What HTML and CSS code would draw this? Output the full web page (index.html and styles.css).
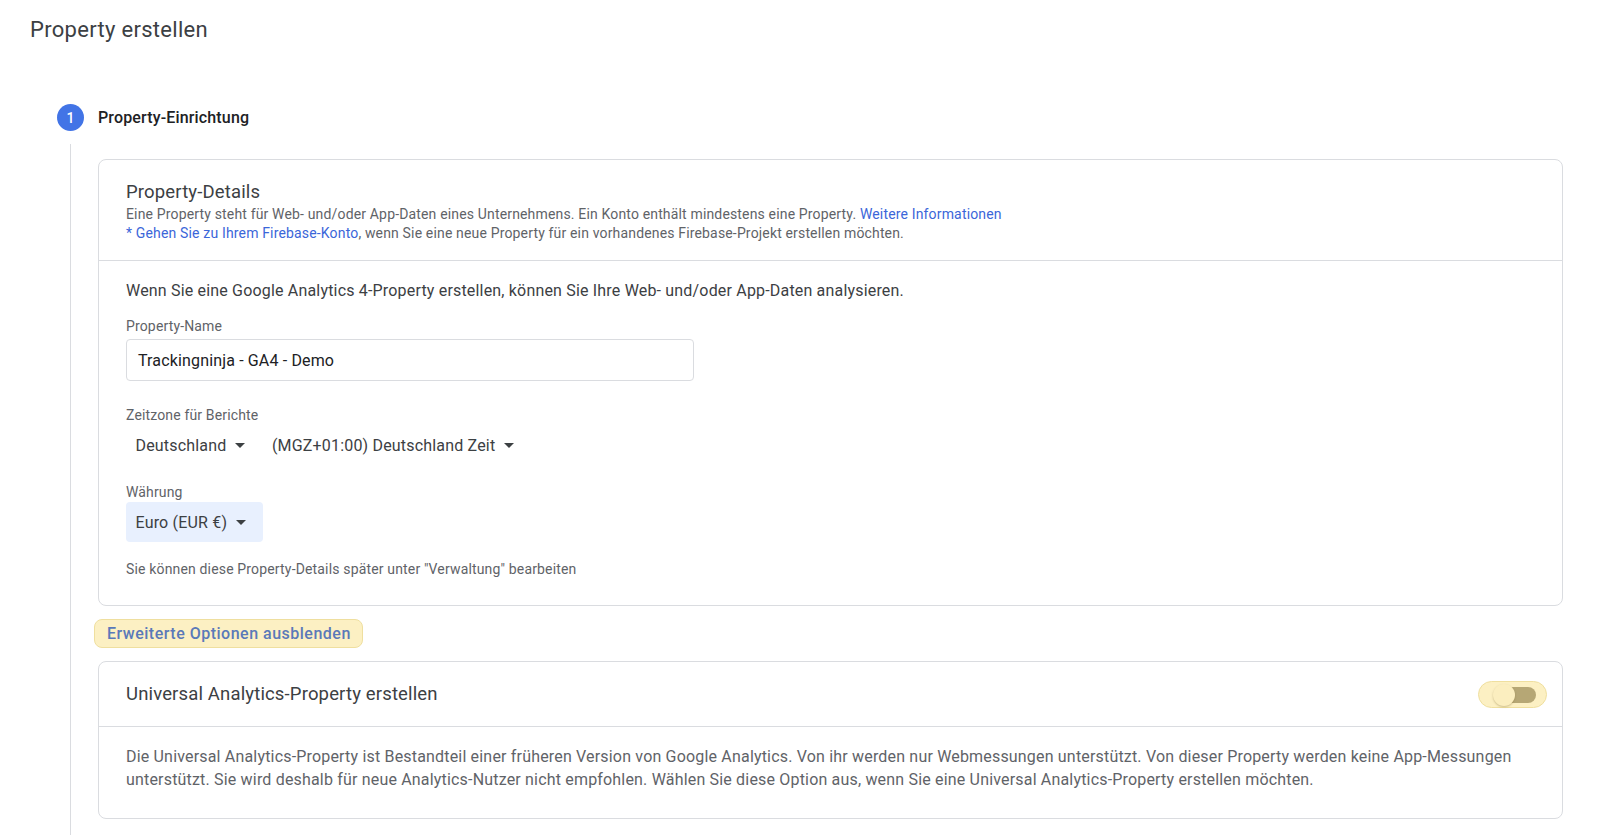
FILE: index.html
```html
<!DOCTYPE html>
<html lang="de">
<head>
<meta charset="utf-8">
<title>Property erstellen</title>
<link rel="stylesheet" href="styles.css">
</head>
<body>
<div class="page">
  <h1 class="title">Property erstellen</h1>
  <div class="step-head">
    <span class="step-num">1</span>
    <span class="step-label">Property-Einrichtung</span>
  </div>
  <div class="step-body">
    <section class="card">
      <div class="card-head">
        <h2 class="card-title">Property-Details</h2>
        <p class="desc">Eine Property steht für Web- und/oder App-Daten eines Unternehmens. Ein Konto enthält mindestens eine Property. <a class="link" href="#">Weitere Informationen</a></p>
        <p class="desc"><a class="link" href="#">* Gehen Sie zu Ihrem Firebase-Konto</a>, wenn Sie eine neue Property für ein vorhandenes Firebase-Projekt erstellen möchten.</p>
      </div>
      <div class="card-body">
        <p class="lead">Wenn Sie eine Google Analytics 4-Property erstellen, können Sie Ihre Web- und/oder App-Daten analysieren.</p>
        <div class="label">Property-Name</div>
        <div class="input">Trackingninja - GA4 - Demo</div>
        <div class="label label-gap">Zeitzone für Berichte</div>
        <div class="selects">
          <div class="select"><span>Deutschland</span><span class="arrow"></span></div>
          <div class="select"><span>(MGZ+01:00) Deutschland Zeit</span><span class="arrow"></span></div>
        </div>
        <div class="label label-gap2">Währung</div>
        <div class="selects">
          <div class="select select-active"><span>Euro (EUR €)</span><span class="arrow"></span></div>
        </div>
        <p class="note">Sie können diese Property-Details später unter "Verwaltung" bearbeiten</p>
      </div>
    </section>
    <button class="adv-btn" type="button">Erweiterte Optionen ausblenden</button>
    <section class="card card2">
      <div class="card-head card-head-row">
        <h2 class="card-title">Universal Analytics-Property erstellen</h2>
        <div class="toggle"><span class="track"></span><span class="knob"></span></div>
      </div>
      <div class="card-body2">
        <p class="para">Die Universal Analytics-Property ist Bestandteil einer früheren Version von Google Analytics. Von ihr werden nur Webmessungen unterstützt. Von dieser Property werden keine App-Messungen unterstützt. Sie wird deshalb für neue Analytics-Nutzer nicht empfohlen. Wählen Sie diese Option aus, wenn Sie eine Universal Analytics-Property erstellen möchten.</p>
      </div>
    </section>
  </div>
</div>
</body>
</html>
```

FILE: styles.css
```css
* { box-sizing: border-box; }
html, body { margin: 0; padding: 0; background: #fff; }
body {
  font-family: Roboto, "Noto Sans", "Liberation Sans", sans-serif;
  color: #3c4043;
  height: 835px;
  overflow: hidden;
}
.page {
  padding: 16px 37px 0 30px;
}
.title {
  margin: 0;
  font-size: 22px;
  line-height: 28px;
  font-weight: 400;
  color: #3c4043;
  letter-spacing: 0.3px;
}
.step-head {
  display: flex;
  align-items: center;
  margin: 60px 0 0 27px;
  height: 27px;
}
.step-num {
  width: 27px;
  height: 27px;
  border-radius: 50%;
  background: #4274e6;
  color: #fff;
  font-size: 14px;
  font-weight: 500;
  display: flex;
  align-items: center;
  justify-content: center;
}
.step-label {
  margin-left: 14px;
  font-size: 16px;
  font-weight: 500;
  color: #202124;
  letter-spacing: 0.15px;
}
.step-body {
  margin: 13px 0 0 40px;
  border-left: 1px solid #dadce0;
  padding: 15px 0 40px 27px;
}
.card {
  border: 1px solid #dadce0;
  border-radius: 8px;
}
.card-head {
  padding: 20px 27px 18px 27px;
  border-bottom: 1px solid #dadce0;
}
.card-title {
  margin: 0;
  font-size: 18.5px;
  line-height: 24px;
  font-weight: 400;
  color: #3c4043;
  letter-spacing: 0.15px;
}
.desc {
  margin: 1px 0 0;
  font-size: 14px;
  line-height: 18.5px;
  color: #5f6368;
  letter-spacing: 0.16px;
}
.desc + .desc { margin-top: 0; }
.link { color: #3b66d9; text-decoration: none; }
.card-body {
  padding: 18px 27px 26px 27px;
}
.lead {
  margin: 0;
  font-size: 16px;
  line-height: 24px;
  color: #3c4043;
  letter-spacing: 0.18px;
}
.label {
  margin-top: 13px;
  font-size: 14px;
  line-height: 20px;
  color: #5f6368;
  letter-spacing: 0.15px;
}
.label-gap { margin-top: 24px; }
.label-gap2 { margin-top: 17px; }
.input {
  margin-top: 3px;
  width: 568px;
  height: 42px;
  border: 1px solid #dadce0;
  border-radius: 4px;
  padding: 0 11px;
  display: flex;
  align-items: center;
  font-size: 16px;
  color: #202124;
  letter-spacing: 0.15px;
}
.selects {
  display: flex;
}
.select {
  height: 40px;
  display: flex;
  align-items: center;
  padding: 0 17px 0 9.5px;
  font-size: 16px;
  color: #3c4043;
  border-radius: 4px;
  letter-spacing: 0.18px;
}
.select-active { background: #e8f0fe; }
.arrow {
  margin-left: 9px;
  width: 0;
  height: 0;
  border-left: 5px solid transparent;
  border-right: 5px solid transparent;
  border-top: 5px solid #3c4043;
}
.note {
  margin: 17px 0 0;
  font-size: 14px;
  line-height: 20px;
  color: #5f6368;
  letter-spacing: 0.16px;
}
.adv-btn {
  display: block;
  margin: 13px 0 0 -4px;
  height: 29px;
  padding: 0 11px 0 12px;
  background: #fcf0c3;
  border: 1px solid #efdf9f;
  border-radius: 8px;
  font-family: Roboto, "Noto Sans", sans-serif;
  font-size: 16px;
  font-weight: 500;
  color: #5a79b9;
  letter-spacing: 0.5px;
}
.card2 { margin-top: 13px; }
.card-head-row {
  display: flex;
  align-items: center;
  justify-content: space-between;
  height: 65px;
  padding: 0 15px 0 27px;
}
.toggle {
  position: relative;
  width: 69px;
  height: 27px;
  border-radius: 14px;
  background: #fcf0c3;
  border: 1px solid #efdf9f;
}
.track {
  position: absolute;
  left: 22px;
  top: 5px;
  width: 35px;
  height: 16px;
  border-radius: 8px;
  background: #b6a775;
}
.knob {
  position: absolute;
  left: 14px;
  top: 2px;
  width: 22px;
  height: 22px;
  border-radius: 50%;
  background: #fbeebf;
  box-shadow: 0 1px 2px rgba(120, 100, 40, 0.35);
}
.card-body2 {
  padding: 19px 40px 27px 27px;
}
.para {
  margin: 0;
  font-size: 16px;
  line-height: 22.5px;
  color: #5f6368;
  letter-spacing: 0.18px;
}
```
